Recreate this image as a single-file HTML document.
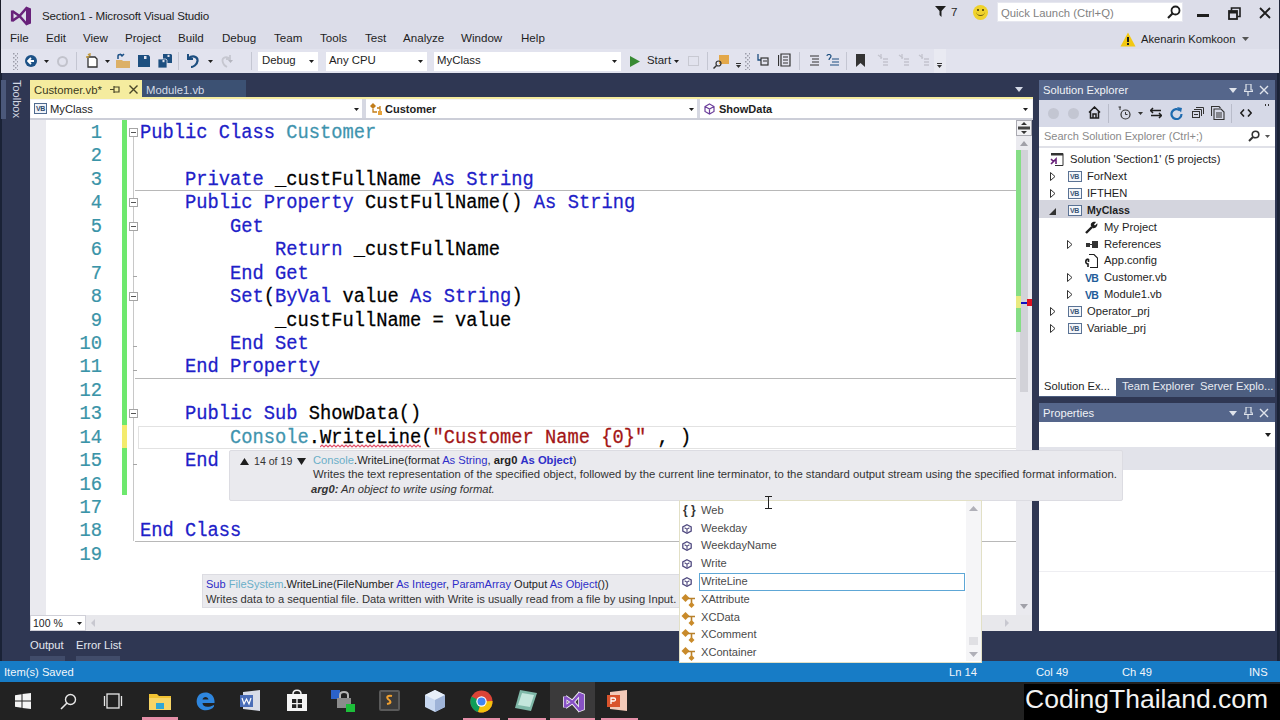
<!DOCTYPE html>
<html><head><meta charset="utf-8">
<style>
*{margin:0;padding:0;box-sizing:border-box}
html,body{width:1280px;height:720px;overflow:hidden;background:#DCDDE9;font-family:"Liberation Sans",sans-serif;}
.a{position:absolute}
.t{position:absolute;white-space:pre;line-height:1}
.mono{font-family:"Liberation Mono",monospace}
#band{left:0;top:73px;width:1280px;height:589px;background:#2B3755}
#status{left:0;top:661px;width:1280px;height:21px;background:#1C83C6}
#task{left:0;top:682px;width:1280px;height:38px;background:#1E1E1E}
#editor{left:30px;top:119px;width:1002px;height:512px;background:#FFFFFF}
.code{position:absolute;left:140px;font-family:"Liberation Mono",monospace;font-size:18.75px;white-space:pre;line-height:23.44px;height:23.44px;color:#000;-webkit-text-stroke:0.25px currentColor;transform-origin:0 0;transform:translateY(0.5px) scaleY(1.1)}
.ln{position:absolute;left:60px;width:42px;text-align:right;font-family:"Liberation Mono",monospace;font-size:18.75px;line-height:23.44px;color:#3A94A8;-webkit-text-stroke:0.2px currentColor;transform-origin:0 0;transform:translateY(0.5px) scaleY(1.1)}
.k{color:#2020C8}
.ty{color:#3F94AE}
.s{color:#A31515}
</style></head><body>
<!-- ===== TOP: title, menu, toolbar ===== -->
<div class="a" style="left:0;top:0;width:1280px;height:49px;background:#DCDDE9"></div>
<div class="a" style="left:0;top:49px;width:1280px;height:24px;background:#E2E3EE"></div>
<div class="a" style="left:0;top:0;width:1px;height:720px;background:#1A1C28"></div>
<!-- VS logo -->
<svg class="a" style="left:5px;top:2px" width="30" height="28" viewBox="0 0 30 28"><path d="M7.2 9 L14.5 14 L22 5.5 M7.2 19 L14.5 14 L22 22.5 M7.2 8.5 V19.5" fill="none" stroke="#68217A" stroke-width="2.6" stroke-linejoin="round"/><path d="M21 4.6 L26 6.6 V21.4 L21 23.4Z" fill="#68217A"/></svg>
<div class="t" style="left:42px;top:10px;font-size:11.6px;letter-spacing:-0.18px;color:#1E1E1E">Section1 - Microsoft Visual Studio</div>
<!-- menu -->
<div class="t" style="left:10px;top:32px;font-size:11.6px;color:#1E1E1E">File</div>
<div class="t" style="left:46px;top:32px;font-size:11.6px;color:#1E1E1E">Edit</div>
<div class="t" style="left:83px;top:32px;font-size:11.6px;color:#1E1E1E">View</div>
<div class="t" style="left:125px;top:32px;font-size:11.6px;color:#1E1E1E">Project</div>
<div class="t" style="left:178px;top:32px;font-size:11.6px;color:#1E1E1E">Build</div>
<div class="t" style="left:222px;top:32px;font-size:11.6px;color:#1E1E1E">Debug</div>
<div class="t" style="left:274px;top:32px;font-size:11.6px;color:#1E1E1E">Team</div>
<div class="t" style="left:320px;top:32px;font-size:11.6px;color:#1E1E1E">Tools</div>
<div class="t" style="left:365px;top:32px;font-size:11.6px;color:#1E1E1E">Test</div>
<div class="t" style="left:403px;top:32px;font-size:11.6px;color:#1E1E1E">Analyze</div>
<div class="t" style="left:461px;top:32px;font-size:11.6px;color:#1E1E1E">Window</div>
<div class="t" style="left:521px;top:32px;font-size:11.6px;color:#1E1E1E">Help</div>
<!-- top right -->
<svg class="a" style="left:935px;top:6px" width="11" height="11" viewBox="0 0 11 11"><path d="M0 0 H11 L6.5 5 V11 L4.5 9 V5 Z" fill="#1E1E1E"/></svg>
<div class="t" style="left:951px;top:6px;font-size:11.6px;color:#1E1E1E">7</div>
<div class="a" style="left:973px;top:5px;width:15px;height:15px;border-radius:50%;background:#EFD22B"></div>
<div class="a" style="left:977px;top:9px;width:2px;height:2px;background:#6B5A10"></div>
<div class="a" style="left:982px;top:9px;width:2px;height:2px;background:#6B5A10"></div>
<div class="a" style="left:976px;top:11px;width:9px;height:5px;border-bottom:1.5px solid #6B5A10;border-radius:0 0 5px 5px"></div>
<div class="a" style="left:997px;top:2px;width:186px;height:20px;background:#FFFFFF;border:1px solid #E6E7EF"></div>
<div class="t" style="left:1001px;top:8px;font-size:11.3px;color:#828282">Quick Launch (Ctrl+Q)</div>
<svg class="a" style="left:1167px;top:5px" width="14" height="14" viewBox="0 0 14 14"><circle cx="8.5" cy="5.5" r="4" fill="none" stroke="#1E1E1E" stroke-width="1.8"/><path d="M5.5 8.5 L1 13" stroke="#1E1E1E" stroke-width="2.2"/></svg>
<div class="a" style="left:1197px;top:14px;width:12px;height:3px;background:#1E1E1E"></div>
<svg class="a" style="left:1228px;top:7px" width="13" height="13" viewBox="0 0 13 13"><path d="M3.5 3.5 V1 H12 V9.5 H9.5" fill="none" stroke="#1E1E1E" stroke-width="1.6"/><rect x="1" y="4" width="8" height="8" fill="none" stroke="#1E1E1E" stroke-width="1.8"/><rect x="1" y="4" width="8" height="2.5" fill="#1E1E1E"/></svg>
<svg class="a" style="left:1259px;top:7px" width="12" height="12" viewBox="0 0 12 12"><path d="M1 1 L11 11 M11 1 L1 11" stroke="#1E1E1E" stroke-width="1.8"/></svg>
<svg class="a" style="left:1120px;top:32px" width="16" height="15" viewBox="0 0 16 15"><path d="M8 0.5 L15.5 14.5 H0.5 Z" fill="#F2C811"/><rect x="7" y="5" width="2" height="5" fill="#1E1E1E"/><rect x="7" y="11" width="2" height="2" fill="#1E1E1E"/></svg>
<div class="t" style="left:1141px;top:34px;font-size:11.2px;color:#1E1E1E">Akenarin Komkoon</div>
<svg class="a" style="left:1242px;top:37px" width="7" height="4"><path d="M0 0 H7 L3.5 4 Z" fill="#555"/></svg>

<!-- toolbar -->
<svg class="a" style="left:13px;top:53px" width="5" height="17"><defs><pattern id="gp13" width="4" height="4" patternUnits="userSpaceOnUse"><rect x="0" y="0" width="1.5" height="1.5" fill="#9C9DAA"/><rect x="2" y="2" width="1.5" height="1.5" fill="#9C9DAA"/></pattern></defs><rect width="5" height="17" fill="url(#gp13)"/></svg>
<div class="a" style="left:25px;top:55px;width:12px;height:12px;border-radius:50%;background:#1D5287"></div>
<svg class="a" style="left:27px;top:57px" width="8" height="8" viewBox="0 0 8 8"><path d="M1 4 H7 M4 1 L1 4 L4 7" fill="none" stroke="#fff" stroke-width="1.8"/></svg>
<svg class="a" style="left:44px;top:60px" width="5" height="3"><path d="M0 0 H5 L2.5 3Z" fill="#1E1E1E"/></svg>
<div class="a" style="left:57px;top:56px;width:11px;height:11px;border-radius:50%;border:2px solid #C2C3CC"></div>
<div class="a" style="left:76px;top:52px;width:1px;height:18px;background:#C4C6D2"></div>
<svg class="a" style="left:85px;top:53px" width="14" height="15" viewBox="0 0 14 15"><path d="M3 4 H10 L12 6 V14 H3 Z" fill="#fff" stroke="#333" stroke-width="1.3"/><path d="M3 1 L5 3 M1 4 H4 M5 0 V3" stroke="#C29A3A" stroke-width="1.3"/></svg>
<svg class="a" style="left:105px;top:60px" width="5" height="3"><path d="M0 0 H5 L2.5 3Z" fill="#1E1E1E"/></svg>
<svg class="a" style="left:116px;top:53px" width="14" height="15" viewBox="0 0 14 15"><path d="M0 7 H6 L7 8 H14 V15 H0 Z" fill="#DCB067"/><path d="M2 6 V3 C2 1 6 1 6 3 M4 1 L6 3 L8 1" fill="none" stroke="#1D5287" stroke-width="1.5"/></svg>
<svg class="a" style="left:138px;top:55px" width="12" height="12" viewBox="0 0 12 12"><path d="M0 0 H10.5 L12 1.5 V12 H0 Z" fill="#1D4F80"/><rect x="6" y="1" width="2.5" height="3" fill="#E2E3EE"/></svg>
<svg class="a" style="left:158px;top:54px" width="14" height="14" viewBox="0 0 14 14"><path d="M5 0 H13 L14 1 V9 H5 Z" fill="#1D4F80"/><rect x="9.5" y="0.8" width="2" height="2.2" fill="#E2E3EE"/><path d="M0 5 H8 L9 6 V14 H0 Z" fill="#1D4F80" stroke="#E2E3EE" stroke-width="0.8"/><rect x="4.5" y="6" width="2" height="2.2" fill="#E2E3EE"/></svg>
<div class="a" style="left:178px;top:52px;width:1px;height:18px;background:#C4C6D2"></div>
<svg class="a" style="left:186px;top:53px" width="13" height="15" viewBox="0 0 13 15"><path d="M2 1 V6 H7" fill="none" stroke="#1D4F80" stroke-width="2"/><path d="M2.5 5.5 C6 2 12 3 11.5 8 C11 12 7 14 5 14" fill="none" stroke="#1D4F80" stroke-width="2.2"/></svg>
<svg class="a" style="left:208px;top:60px" width="5" height="3"><path d="M0 0 H5 L2.5 3Z" fill="#1E1E1E"/></svg>
<svg class="a" style="left:221px;top:54px" width="11" height="14" viewBox="0 0 11 14"><path d="M9 1 V5 H5 M8.5 4.5 C6 2 1 3 1.5 7 C2 10 4 12 6 13" fill="none" stroke="#C6C7D0" stroke-width="1.8"/></svg>
<svg class="a" style="left:228px;top:60px" width="5" height="3"><path d="M0 0 H5 L2.5 3Z" fill="#B5B6BF"/></svg>
<div class="a" style="left:251px;top:52px;width:1px;height:18px;background:#C4C6D2"></div>
<!-- combos -->
<div class="a" style="left:258px;top:52px;width:60px;height:19px;background:#FFFFFF"></div>
<div class="t" style="left:262px;top:55px;font-size:11.4px;color:#1E1E1E">Debug</div>
<svg class="a" style="left:309px;top:60px" width="5" height="3"><path d="M0 0 H5 L2.5 3Z" fill="#1E1E1E"/></svg>
<div class="a" style="left:326px;top:52px;width:101px;height:19px;background:#FFFFFF"></div>
<div class="t" style="left:329px;top:55px;font-size:11.4px;color:#1E1E1E">Any CPU</div>
<svg class="a" style="left:418px;top:60px" width="5" height="3"><path d="M0 0 H5 L2.5 3Z" fill="#1E1E1E"/></svg>
<div class="a" style="left:434px;top:52px;width:187px;height:19px;background:#FFFFFF"></div>
<div class="t" style="left:437px;top:55px;font-size:11.4px;color:#1E1E1E">MyClass</div>
<svg class="a" style="left:612px;top:60px" width="5" height="3"><path d="M0 0 H5 L2.5 3Z" fill="#1E1E1E"/></svg>
<svg class="a" style="left:630px;top:56px" width="10" height="11"><path d="M0 0 L10 5.5 L0 11Z" fill="#388A34"/></svg>
<div class="t" style="left:647px;top:55px;font-size:11.4px;color:#1E1E1E">Start</div>
<svg class="a" style="left:674px;top:60px" width="5" height="3"><path d="M0 0 H5 L2.5 3Z" fill="#1E1E1E"/></svg>
<div class="a" style="left:688px;top:56px;width:11px;height:10px;border:1px solid #C8C9D2"></div>
<div class="a" style="left:707px;top:52px;width:1px;height:18px;background:#C4C6D2"></div>
<div class="a" style="left:719px;top:55px;width:10px;height:9px;background:#E3A84A"></div>
<svg class="a" style="left:713px;top:60px" width="9" height="9"><circle cx="5.5" cy="3.5" r="2.5" fill="none" stroke="#333" stroke-width="1.2"/><path d="M3.5 5.5 L0.5 8.5" stroke="#333" stroke-width="1.5"/></svg>
<svg class="a" style="left:736px;top:63px" width="5" height="5"><rect x="0" y="0" width="5" height="1" fill="#333"/><path d="M0 2 H5 L2.5 5Z" fill="#333"/></svg>
<svg class="a" style="left:745px;top:53px" width="5" height="17"><defs><pattern id="gp745" width="4" height="4" patternUnits="userSpaceOnUse"><rect x="0" y="0" width="1.5" height="1.5" fill="#9C9DAA"/><rect x="2" y="2" width="1.5" height="1.5" fill="#9C9DAA"/></pattern></defs><rect width="5" height="17" fill="url(#gp745)"/></svg>
<svg class="a" style="left:757px;top:54px" width="12" height="12" viewBox="0 0 12 12"><path d="M1 0 V6 H4" fill="none" stroke="#1D4F80" stroke-width="1.3"/><rect x="4" y="4" width="7" height="7" fill="none" stroke="#333" stroke-width="1.2"/><path d="M6 7 H10" stroke="#333"/></svg>
<svg class="a" style="left:778px;top:53px" width="14" height="14" viewBox="0 0 14 14"><path d="M0.5 2 V13 M3 1 H12 V13 H3 Z M5 4 H10 M5 7 H10 M5 10 H10" fill="none" stroke="#333" stroke-width="1.2"/></svg>
<div class="a" style="left:799px;top:52px;width:1px;height:18px;background:#C4C6D2"></div>
<svg class="a" style="left:810px;top:55px" width="10" height="11"><path d="M0 1 H9 M2 4 H9 M2 7 H9 M0 10 H9" stroke="#333" stroke-width="1.2"/></svg>
<svg class="a" style="left:826px;top:54px" width="14" height="13"><path d="M1 2 C1 0 5 0 5 2 C5 4 3 4 3 6 M6 5 H13 M6 8 H13 M4 11 H13" fill="none" stroke="#1D4F80" stroke-width="1.2"/></svg>
<div class="a" style="left:846px;top:52px;width:1px;height:18px;background:#C4C6D2"></div>
<svg class="a" style="left:856px;top:54px" width="9" height="13"><path d="M0 0 H9 V13 L4.5 9 L0 13Z" fill="#333"/></svg>
<svg class="a" style="left:877px;top:54px" width="12" height="12"><path d="M1 1 L5 4 M4 0 V5 M6 5 H11 M6 8 H11 M6 11 H11" stroke="#C3C4CE" stroke-width="1.3"/></svg>
<svg class="a" style="left:898px;top:54px" width="12" height="12"><path d="M1 1 L5 4 M4 0 V5 M6 5 H11 M6 8 H11 M6 11 H11" stroke="#C3C4CE" stroke-width="1.3"/></svg>
<svg class="a" style="left:918px;top:54px" width="12" height="12"><path d="M1 1 L5 4 M4 0 V5 M6 5 H11 M6 8 H11 M6 11 H11" stroke="#C3C4CE" stroke-width="1.3"/></svg>
<div class="a" style="left:934px;top:49px;width:12px;height:24px;background:#E9EAF2"></div>
<svg class="a" style="left:937px;top:63px" width="5" height="5"><rect x="0" y="0" width="5" height="1" fill="#333"/><path d="M0 2 H5 L2.5 5Z" fill="#333"/></svg>
<!-- ===== DARK BAND / TABS / NAV ===== -->
<div class="a" style="left:0;top:73px;width:1280px;height:589px;background:#2F3753"></div>
<div class="a" style="left:0;top:73px;width:2px;height:589px;background:#1A2236"></div>
<div class="a" style="left:1277px;top:73px;width:3px;height:589px;background:#1A2236"></div>
<div class="a" style="left:1279px;top:0;width:1px;height:720px;background:#20263A"></div>
<!-- toolbox -->
<div class="a" style="left:1px;top:80px;width:5px;height:39px;background:#4B587A"></div>
<div class="t" style="left:22px;top:80px;font-size:11px;color:#D3D8E4;transform-origin:0 0;transform:rotate(90deg)">Toolbox</div>
<!-- doc tabs -->
<div class="a" style="left:30px;top:80px;width:112px;height:19px;background:#F5EC9F"></div>
<div class="t" style="left:34px;top:85px;font-size:11.3px;color:#3B3A20">Customer.vb*</div>
<svg class="a" style="left:110px;top:85px" width="10" height="9" viewBox="0 0 10 9"><path d="M0 4.5 H4 M4 1 V8 M4 2 H9 V7 H4" fill="none" stroke="#4A4628" stroke-width="1.2"/></svg>
<svg class="a" style="left:129px;top:85px" width="9" height="9"><path d="M0.5 0.5 L8.5 8.5 M8.5 0.5 L0.5 8.5" stroke="#4A4628" stroke-width="1.4"/></svg>
<div class="a" style="left:142px;top:80px;width:104px;height:17px;background:#3C5173"></div>
<div class="t" style="left:146px;top:85px;font-size:11.3px;color:#D4DAE6">Module1.vb</div>
<svg class="a" style="left:1015px;top:87px" width="8" height="5"><path d="M0 0 H8 L4 5Z" fill="#D5DAE6"/></svg>
<div class="a" style="left:30px;top:97px;width:1003px;height:2px;background:#F5EC9F"></div>
<!-- nav bar -->
<div class="a" style="left:30px;top:99px;width:1003px;height:21px;background:#F4F4F7"></div>
<div class="a" style="left:31px;top:100px;width:331px;height:19px;background:#FFFFFF"></div>
<div class="a" style="left:366px;top:100px;width:331px;height:19px;background:#FFFFFF"></div>
<div class="a" style="left:700px;top:100px;width:332px;height:19px;background:#FFFFFF"></div>
<div class="a" style="left:362px;top:99px;width:4px;height:21px;background:#D6D8E2"></div>
<div class="a" style="left:697px;top:99px;width:3px;height:21px;background:#D6D8E2"></div>
<div class="a" style="left:30px;top:118px;width:1003px;height:2px;background:#CCCED8"></div>
<div class="a" style="left:34px;top:103px;width:13px;height:11px;border:1px solid #4F6A8F;background:#F0F3F8"></div>
<div class="t" style="left:36px;top:105px;font-size:7px;font-weight:700;color:#2E4A6E;letter-spacing:-0.5px">VB</div>
<div class="t" style="left:50px;top:104px;font-size:11.2px;color:#1E1E1E">MyClass</div>
<svg class="a" style="left:354px;top:108px" width="5" height="3"><path d="M0 0 H5 L2.5 3Z" fill="#1E1E1E"/></svg>
<svg class="a" style="left:370px;top:103px" width="13" height="12" viewBox="0 0 13 12"><path d="M0 3 L3 0 L6 3 L3 6Z" fill="#C27D1A"/><path d="M3 6 V9 H7 M7 5 H10 M10 3 V11" fill="none" stroke="#C27D1A" stroke-width="1.3"/><rect x="8" y="8" width="4" height="4" fill="#E8A33A"/></svg>
<div class="t" style="left:385px;top:104px;font-size:11px;font-weight:700;color:#1E1E1E">Customer</div>
<svg class="a" style="left:689px;top:108px" width="5" height="3"><path d="M0 0 H5 L2.5 3Z" fill="#1E1E1E"/></svg>
<svg class="a" style="left:704px;top:103px" width="11" height="12" viewBox="0 0 11 12"><path d="M5.5 1 L10 3.5 V8.5 L5.5 11 L1 8.5 V3.5 Z M1 3.5 L5.5 6 L10 3.5 M5.5 6 V11" fill="none" stroke="#6C3F9B" stroke-width="1.2"/></svg>
<div class="t" style="left:719px;top:104px;font-size:11px;font-weight:700;color:#1E1E1E">ShowData</div>
<svg class="a" style="left:1023px;top:108px" width="5" height="3"><path d="M0 0 H5 L2.5 3Z" fill="#1E1E1E"/></svg>
<!-- ===== EDITOR ===== -->
<div class="a" style="left:30px;top:120px;width:986px;height:495px;background:#FFFFFF"></div>
<div class="a" style="left:30px;top:120px;width:16px;height:495px;background:#EAEAEF"></div>
<div class="a" style="left:138px;top:426px;width:878px;height:23px;border:1px solid #E2E2E2;border-right:none"></div>
<div class="a" style="left:135px;top:190px;width:881px;height:1px;background:#B8B8B8"></div>
<div class="a" style="left:135px;top:378px;width:881px;height:1px;background:#B8B8B8"></div>
<div class="a" style="left:135px;top:541px;width:881px;height:1px;background:#B8B8B8"></div>
<div class="a" style="left:133px;top:136px;width:1px;height:405px;background:#C8C8C8"></div>
<div class="a" style="left:129px;top:128px;width:9px;height:9px;border:1px solid #A5A5A5;background:#fff"></div>
<div class="a" style="left:131px;top:132px;width:5px;height:1px;background:#555"></div>
<div class="a" style="left:129px;top:198px;width:9px;height:9px;border:1px solid #A5A5A5;background:#fff"></div>
<div class="a" style="left:131px;top:202px;width:5px;height:1px;background:#555"></div>
<div class="a" style="left:129px;top:222px;width:9px;height:9px;border:1px solid #A5A5A5;background:#fff"></div>
<div class="a" style="left:131px;top:226px;width:5px;height:1px;background:#555"></div>
<div class="a" style="left:129px;top:292px;width:9px;height:9px;border:1px solid #A5A5A5;background:#fff"></div>
<div class="a" style="left:131px;top:296px;width:5px;height:1px;background:#555"></div>
<div class="a" style="left:129px;top:409px;width:9px;height:9px;border:1px solid #A5A5A5;background:#fff"></div>
<div class="a" style="left:131px;top:413px;width:5px;height:1px;background:#555"></div>
<div class="a" style="left:133px;top:276px;width:4px;height:1px;background:#A5A5A5"></div>
<div class="a" style="left:133px;top:346px;width:4px;height:1px;background:#A5A5A5"></div>
<div class="a" style="left:133px;top:370px;width:4px;height:1px;background:#A5A5A5"></div>
<div class="a" style="left:133px;top:464px;width:4px;height:1px;background:#A5A5A5"></div>
<div class="a" style="left:122px;top:120px;width:5px;height:305px;background:#6EE86E"></div>
<div class="a" style="left:122px;top:425px;width:5px;height:23px;background:#F4EB6E"></div>
<div class="a" style="left:122px;top:448px;width:5px;height:47px;background:#6EE86E"></div>
<div class="ln" style="top:120.00px">1</div>
<div class="ln" style="top:143.44px">2</div>
<div class="ln" style="top:166.88px">3</div>
<div class="ln" style="top:190.32px">4</div>
<div class="ln" style="top:213.76px">5</div>
<div class="ln" style="top:237.20px">6</div>
<div class="ln" style="top:260.64px">7</div>
<div class="ln" style="top:284.08px">8</div>
<div class="ln" style="top:307.52px">9</div>
<div class="ln" style="top:330.96px">10</div>
<div class="ln" style="top:354.40px">11</div>
<div class="ln" style="top:377.84px">12</div>
<div class="ln" style="top:401.28px">13</div>
<div class="ln" style="top:424.72px">14</div>
<div class="ln" style="top:448.16px">15</div>
<div class="ln" style="top:471.60px">16</div>
<div class="ln" style="top:495.04px">17</div>
<div class="ln" style="top:518.48px">18</div>
<div class="ln" style="top:541.92px">19</div>
<div class="code" style="top:120.00px"><span class="k">Public</span> <span class="k">Class</span> <span class="ty">Customer</span></div>
<div class="code" style="top:166.88px">    <span class="k">Private</span> _custFullName <span class="k">As</span> <span class="k">String</span></div>
<div class="code" style="top:190.32px">    <span class="k">Public</span> <span class="k">Property</span> CustFullName() <span class="k">As</span> <span class="k">String</span></div>
<div class="code" style="top:213.76px">        <span class="k">Get</span></div>
<div class="code" style="top:237.20px">            <span class="k">Return</span> _custFullName</div>
<div class="code" style="top:260.64px">        <span class="k">End</span> <span class="k">Get</span></div>
<div class="code" style="top:284.08px">        <span class="k">Set</span>(<span class="k">ByVal</span> value <span class="k">As</span> <span class="k">String</span>)</div>
<div class="code" style="top:307.52px">            _custFullName = value</div>
<div class="code" style="top:330.96px">        <span class="k">End</span> <span class="k">Set</span></div>
<div class="code" style="top:354.40px">    <span class="k">End</span> <span class="k">Property</span></div>
<div class="code" style="top:401.28px">    <span class="k">Public</span> <span class="k">Sub</span> ShowData()</div>
<div class="code" style="top:424.72px">        <span class="ty">Console</span>.WriteLine(<span class="s">"Customer Name {0}"</span> , )</div>
<div class="code" style="top:448.16px">    <span class="k">End</span></div>
<div class="code" style="top:518.48px"><span class="k">End</span> <span class="k">Class</span></div>
<svg class="a" style="left:320.0px;top:444px" width="101" height="4"><path d="M0 3 L2 1 L4 3 L6 1 L8 3 L10 1 L12 3 L14 1 L16 3 L18 1 L20 3 L22 1 L24 3 L26 1 L28 3 L30 1 L32 3 L34 1 L36 3 L38 1 L40 3 L42 1 L44 3 L46 1 L48 3 L50 1 L52 3 L54 1 L56 3 L58 1 L60 3 L62 1 L64 3 L66 1 L68 3 L70 1 L72 3 L74 1 L76 3 L78 1 L80 3 L82 1 L84 3 L86 1 L88 3 L90 1 L92 3 L94 1 L96 3 L98 1 L100 3 L102 1" fill="none" stroke="#E0506A" stroke-width="1.2"/></svg>
<div class="a" style="left:1016px;top:120px;width:16px;height:495px;background:#EAEAEF"></div>
<div class="a" style="left:1016px;top:120px;width:16px;height:16px;border:1px solid #AAAAB2;background:#F2F2F5"></div>
<svg class="a" style="left:1018px;top:122px" width="12" height="12" viewBox="0 0 12 12"><path d="M6 0 L9 3 H3Z M6 12 L9 9 H3Z" fill="#333"/><rect x="0" y="4.5" width="12" height="3" fill="#444"/></svg>
<svg class="a" style="left:1020px;top:141px" width="8" height="5"><path d="M0 5 L4 0 L8 5Z" fill="#A0A0A8"/></svg>
<div class="a" style="left:1020px;top:150px;width:8px;height:242px;background:#D2D2D8"></div>
<div class="a" style="left:1016px;top:150px;width:5px;height:182px;background:#86DE86"></div>
<div class="a" style="left:1016px;top:296px;width:5px;height:12px;background:#EAEA80"></div>
<div class="a" style="left:1021px;top:302px;width:6px;height:2px;background:#1010C0"></div>
<div class="a" style="left:1027px;top:299px;width:5px;height:7px;background:#E01020"></div>
<svg class="a" style="left:1020px;top:604px" width="8" height="5"><path d="M0 0 L4 5 L8 0Z" fill="#A0A0A8"/></svg>
<div class="a" style="left:30px;top:615px;width:1002px;height:16px;background:#E8E8EC"></div>
<div class="a" style="left:30px;top:615px;width:56px;height:16px;background:#FFFFFF;border:1px solid #D0D0D8"></div>
<div class="t" style="left:33px;top:618px;font-size:10.5px;color:#1E1E1E">100 %</div>
<svg class="a" style="left:77px;top:622px" width="5" height="3"><path d="M0 0 H5 L2.5 3Z" fill="#1E1E1E"/></svg>
<svg class="a" style="left:91px;top:619px" width="4" height="8"><path d="M4 0 L0 4 L4 8Z" fill="#C8C8D0"/></svg>
<svg class="a" style="left:1005px;top:619px" width="4" height="8"><path d="M0 0 L4 4 L0 8Z" fill="#C8C8D0"/></svg>
<!-- ===== SOLUTION EXPLORER ===== -->
<div class="a" style="left:1039px;top:80px;width:236px;height:20px;background:#55668B"></div>
<div class="t" style="left:1043px;top:85px;font-size:11.2px;color:#F0F2F6">Solution Explorer</div>
<svg class="a" style="left:1229px;top:88px" width="8" height="5"><path d="M0 0 H8 L4 5Z" fill="#E0E4EC"/></svg>
<svg class="a" style="left:1244px;top:84px" width="9" height="12" viewBox="0 0 9 12"><path d="M2 0 H7 V6 H9 V7.5 H0 V6 H2Z M4 7.5 V12" fill="none" stroke="#E0E4EC" stroke-width="1.2"/></svg>
<svg class="a" style="left:1259px;top:85px" width="10" height="10"><path d="M1 1 L9 9 M9 1 L1 9" stroke="#E0E4EC" stroke-width="1.4"/></svg>
<div class="a" style="left:1039px;top:100px;width:236px;height:27px;background:#D6D9E7"></div>
<div class="a" style="left:1048px;top:108px;width:11px;height:11px;border-radius:50%;background:#C3C6D2"></div>
<div class="a" style="left:1068px;top:108px;width:11px;height:11px;border-radius:50%;background:#C3C6D2"></div>
<svg class="a" style="left:1088px;top:106px" width="13" height="13" viewBox="0 0 13 13"><path d="M1 6.5 L6.5 1 L12 6.5 M2.5 5 V12 H10.5 V5 M5 12 V8 H8 V12" fill="none" stroke="#1E1E1E" stroke-width="1.5"/></svg>
<div class="a" style="left:1108px;top:104px;width:1px;height:19px;background:#B9BCCA"></div>
<svg class="a" style="left:1118px;top:106px" width="13" height="14" viewBox="0 0 13 14"><path d="M0.5 1 H3 M2 1 V4" stroke="#333" stroke-width="1"/><circle cx="7.5" cy="8.5" r="4.5" fill="none" stroke="#333" stroke-width="1.2"/><path d="M7.5 6 V8.5 H9.5" fill="none" stroke="#333" stroke-width="1"/></svg>
<svg class="a" style="left:1138px;top:112px" width="5" height="3"><path d="M0 0 H5 L2.5 3Z" fill="#333"/></svg>
<svg class="a" style="left:1150px;top:107px" width="12" height="12" viewBox="0 0 12 12"><path d="M0 3.5 H11 M3 1 L0.5 3.5 L3 6 M12 8.5 H1 M9 6 L11.5 8.5 L9 11" fill="none" stroke="#1E1E1E" stroke-width="1.5"/></svg>
<svg class="a" style="left:1170px;top:106px" width="13" height="14" viewBox="0 0 13 14"><path d="M10 4.5 A5 5 0 1 0 11.5 8" fill="none" stroke="#1F6BAF" stroke-width="2.2"/><path d="M7 1 L12 2 L11 6.5Z" fill="#1F6BAF"/></svg>
<svg class="a" style="left:1192px;top:107px" width="12" height="11" viewBox="0 0 12 11"><path d="M4 0.5 H11.5 V7 M2 2.5 H9.5 V9" fill="none" stroke="#333" stroke-width="1"/><rect x="0.5" y="4.5" width="7" height="6" fill="#D6D9E7" stroke="#333" stroke-width="1"/><path d="M2 7.5 H6" stroke="#333"/></svg>
<svg class="a" style="left:1211px;top:106px" width="14" height="14" viewBox="0 0 14 14"><path d="M0.5 10 V0.5 H8 L9.5 2" fill="none" stroke="#333" stroke-width="1.1"/><path d="M3 3 H10 L13 6 V13.5 H3 Z" fill="#D6D9E7" stroke="#333" stroke-width="1.1"/><path d="M5 7 H11 M5 9 H11 M5 11 H11" stroke="#333"/></svg>
<div class="a" style="left:1231px;top:104px;width:1px;height:19px;background:#B9BCCA"></div>
<svg class="a" style="left:1240px;top:109px" width="12" height="8" viewBox="0 0 12 8"><path d="M4 0.5 L0.8 4 L4 7.5 M8 0.5 L11.2 4 L8 7.5" fill="none" stroke="#1E1E1E" stroke-width="1.6"/></svg>
<div class="a" style="left:1265px;top:104px;width:1px;height:2px;background:#333"></div>
<div class="a" style="left:1268px;top:104px;width:1px;height:2px;background:#333"></div>
<div class="a" style="left:1039px;top:127px;width:236px;height:19px;background:#FFFFFF"></div>
<div class="t" style="left:1044px;top:131px;font-size:11px;color:#8A8A8A">Search Solution Explorer (Ctrl+;)</div>
<svg class="a" style="left:1248px;top:130px" width="12" height="12" viewBox="0 0 12 12"><circle cx="7.5" cy="4.5" r="3.3" fill="none" stroke="#333" stroke-width="1.6"/><path d="M5 7 L1 11" stroke="#333" stroke-width="2"/></svg>
<svg class="a" style="left:1265px;top:135px" width="5" height="3"><path d="M0 0 H5 L2.5 3Z" fill="#555"/></svg>
<div class="a" style="left:1039px;top:146px;width:236px;height:2px;background:#E0E1E8"></div>
<div class="a" style="left:1039px;top:148px;width:236px;height:230px;background:#FFFFFF"></div>
<div class="a" style="left:1039px;top:200px;width:236px;height:18px;background:#D4D5DE"></div>
<!-- solution icon -->
<svg class="a" style="left:1050px;top:153px" width="14" height="13" viewBox="0 0 14 13"><path d="M1 0.5 H13 V12.5 H5" fill="none" stroke="#333" stroke-width="1"/><path d="M1 0.5 H13 V2.5 H1Z" fill="#333"/><path d="M1 6 L3.5 8.5 L1 11 M3.5 8.5 L6 6 V11" fill="none" stroke="#68217A" stroke-width="1.6"/></svg>
<div class="t" style="left:1070px;top:154px;font-size:11.2px;color:#1E1E1E">Solution 'Section1' (5 projects)</div>
<svg class="a" style="left:1050px;top:172px" width="6" height="9"><path d="M0.5 0.5 L5 4.5 L0.5 8.5Z" fill="none" stroke="#333" stroke-width="1"/></svg>
<div class="a" style="left:1068px;top:171px;width:14px;height:11px;border:1px solid #5A7294;background:#F4F6FA"></div>
<div class="t" style="left:1070px;top:173px;font-size:7px;font-weight:700;color:#3A5476;letter-spacing:-0.5px">VB</div>
<div class="t" style="left:1087px;top:171px;font-size:11.2px;color:#1E1E1E">ForNext</div>
<svg class="a" style="left:1050px;top:189px" width="6" height="9"><path d="M0.5 0.5 L5 4.5 L0.5 8.5Z" fill="none" stroke="#333" stroke-width="1"/></svg>
<div class="a" style="left:1068px;top:188px;width:14px;height:11px;border:1px solid #5A7294;background:#F4F6FA"></div>
<div class="t" style="left:1070px;top:190px;font-size:7px;font-weight:700;color:#3A5476;letter-spacing:-0.5px">VB</div>
<div class="t" style="left:1087px;top:188px;font-size:11.2px;color:#1E1E1E">IFTHEN</div>
<svg class="a" style="left:1049px;top:208px" width="7" height="7"><path d="M7 0 V7 H0Z" fill="#333"/></svg>
<div class="a" style="left:1068px;top:205px;width:14px;height:11px;border:1px solid #5A7294;background:#F4F6FA"></div>
<div class="t" style="left:1070px;top:207px;font-size:7px;font-weight:700;color:#3A5476;letter-spacing:-0.5px">VB</div>
<div class="t" style="left:1087px;top:205px;font-size:10.6px;font-weight:700;color:#1E1E1E">MyClass</div>
<svg class="a" style="left:1085px;top:221px" width="13" height="13" viewBox="0 0 13 13"><path d="M1 12 L7 6" stroke="#1E1E1E" stroke-width="2.4"/><path d="M6 5 C5 2 8 0 11 1 L9 3.5 L10 4.5 L12.3 2.3 C13 5 10.5 8 7.5 7Z" fill="#1E1E1E"/></svg>
<div class="t" style="left:1104px;top:222px;font-size:11.2px;color:#1E1E1E">My Project</div>
<svg class="a" style="left:1067px;top:240px" width="6" height="9"><path d="M0.5 0.5 L5 4.5 L0.5 8.5Z" fill="none" stroke="#333" stroke-width="1"/></svg>
<div class="a" style="left:1086px;top:243px;width:4px;height:4px;background:#333"></div><div class="a" style="left:1090px;top:244px;width:2px;height:1px;background:#333"></div><div class="a" style="left:1092px;top:241px;width:6px;height:7px;background:#333"></div>
<div class="t" style="left:1104px;top:239px;font-size:11.2px;color:#1E1E1E">References</div>
<svg class="a" style="left:1085px;top:254px" width="13" height="14" viewBox="0 0 13 14"><path d="M4 0.5 H9 L12.5 4 V13.5 H5" fill="none" stroke="#1E1E1E" stroke-width="1.1"/><path d="M3.5 5 C0 5 0 10 3 10 V13 M3.5 5 V8" fill="none" stroke="#1E1E1E" stroke-width="1.6"/></svg>
<div class="t" style="left:1104px;top:255px;font-size:11.2px;color:#1E1E1E">App.config</div>
<svg class="a" style="left:1067px;top:273px" width="6" height="9"><path d="M0.5 0.5 L5 4.5 L0.5 8.5Z" fill="none" stroke="#333" stroke-width="1"/></svg>
<div class="t" style="left:1085px;top:273px;font-size:10.5px;font-weight:700;color:#1F5D99;letter-spacing:-0.8px">VB</div>
<div class="t" style="left:1104px;top:272px;font-size:11.2px;color:#1E1E1E">Customer.vb</div>
<svg class="a" style="left:1067px;top:290px" width="6" height="9"><path d="M0.5 0.5 L5 4.5 L0.5 8.5Z" fill="none" stroke="#333" stroke-width="1"/></svg>
<div class="t" style="left:1085px;top:290px;font-size:10.5px;font-weight:700;color:#1F5D99;letter-spacing:-0.8px">VB</div>
<div class="t" style="left:1104px;top:289px;font-size:11.2px;color:#1E1E1E">Module1.vb</div>
<svg class="a" style="left:1050px;top:307px" width="6" height="9"><path d="M0.5 0.5 L5 4.5 L0.5 8.5Z" fill="none" stroke="#333" stroke-width="1"/></svg>
<div class="a" style="left:1068px;top:306px;width:14px;height:11px;border:1px solid #5A7294;background:#F4F6FA"></div>
<div class="t" style="left:1070px;top:308px;font-size:7px;font-weight:700;color:#3A5476;letter-spacing:-0.5px">VB</div>
<div class="t" style="left:1087px;top:306px;font-size:11.2px;color:#1E1E1E">Operator_prj</div>
<svg class="a" style="left:1050px;top:324px" width="6" height="9"><path d="M0.5 0.5 L5 4.5 L0.5 8.5Z" fill="none" stroke="#333" stroke-width="1"/></svg>
<div class="a" style="left:1068px;top:323px;width:14px;height:11px;border:1px solid #5A7294;background:#F4F6FA"></div>
<div class="t" style="left:1070px;top:325px;font-size:7px;font-weight:700;color:#3A5476;letter-spacing:-0.5px">VB</div>
<div class="t" style="left:1087px;top:323px;font-size:11.2px;color:#1E1E1E">Variable_prj</div>
<!-- bottom tabs -->
<div class="a" style="left:1039px;top:378px;width:236px;height:19px;background:#4D5E80"></div>
<div class="a" style="left:1039px;top:378px;width:77px;height:18px;background:#FFFFFF"></div>
<div class="t" style="left:1044px;top:381px;font-size:11.2px;color:#1E1E1E">Solution Ex...</div>
<div class="t" style="left:1122px;top:381px;font-size:11.2px;color:#E8EBF2">Team Explorer</div>
<div class="t" style="left:1200px;top:381px;font-size:11.2px;color:#E8EBF2">Server Explo...</div>
<!-- properties -->
<div class="a" style="left:1039px;top:403px;width:236px;height:19px;background:#55668B"></div>
<div class="t" style="left:1043px;top:408px;font-size:11.2px;color:#F0F2F6">Properties</div>
<svg class="a" style="left:1229px;top:411px" width="8" height="5"><path d="M0 0 H8 L4 5Z" fill="#E0E4EC"/></svg>
<svg class="a" style="left:1244px;top:407px" width="9" height="12" viewBox="0 0 9 12"><path d="M2 0 H7 V6 H9 V7.5 H0 V6 H2Z M4 7.5 V12" fill="none" stroke="#E0E4EC" stroke-width="1.2"/></svg>
<svg class="a" style="left:1259px;top:408px" width="10" height="10"><path d="M1 1 L9 9 M9 1 L1 9" stroke="#E0E4EC" stroke-width="1.4"/></svg>
<div class="a" style="left:1039px;top:422px;width:236px;height:209px;background:#FFFFFF"></div>
<svg class="a" style="left:1265px;top:433px" width="6" height="4"><path d="M0 0 H6 L3 4Z" fill="#1E1E1E"/></svg>
<div class="a" style="left:1039px;top:447px;width:236px;height:23px;background:#E2E3EA"></div>
<div class="a" style="left:1039px;top:571px;width:236px;height:1px;background:#EEEEF2"></div>
<!-- ===== OUTPUT TABS / STATUS / TASKBAR ===== -->
<div class="t" style="left:30px;top:640px;font-size:11.2px;color:#E4E7EF">Output</div>
<div class="t" style="left:76px;top:640px;font-size:11.2px;color:#E4E7EF">Error List</div>
<div class="a" style="left:30px;top:656px;width:35px;height:5px;background:#414C6A"></div>
<div class="a" style="left:76px;top:656px;width:44px;height:5px;background:#414C6A"></div>
<div class="a" style="left:0;top:661px;width:1280px;height:21px;background:#177CC6"></div>
<div class="t" style="left:4px;top:667px;font-size:11.2px;color:#F2F6FA">Item(s) Saved</div>
<div class="t" style="left:949px;top:667px;font-size:11.2px;color:#F2F6FA">Ln 14</div>
<div class="t" style="left:1036px;top:667px;font-size:11.2px;color:#F2F6FA">Col 49</div>
<div class="t" style="left:1122px;top:667px;font-size:11.2px;color:#F2F6FA">Ch 49</div>
<div class="t" style="left:1249px;top:667px;font-size:11.2px;color:#F2F6FA">INS</div>
<div class="a" style="left:0;top:682px;width:1280px;height:38px;background:#222222"></div>
<!-- windows logo -->
<svg class="a" style="left:15px;top:693px" width="16" height="16" viewBox="0 0 16 16"><path d="M0 2.2 L6.5 1.3 V7.5 H0Z M7.5 1.1 L16 0 V7.5 H7.5Z M0 8.5 H6.5 V14.7 L0 13.8Z M7.5 8.5 H16 V16 L7.5 14.9Z" fill="#F4F4F4"/></svg>
<svg class="a" style="left:60px;top:693px" width="17" height="17" viewBox="0 0 17 17"><circle cx="10.5" cy="6.5" r="5" fill="none" stroke="#E8E8E8" stroke-width="1.4"/><path d="M7 10 L1 16" stroke="#E8E8E8" stroke-width="1.6"/></svg>
<svg class="a" style="left:103px;top:693px" width="20" height="16" viewBox="0 0 20 16"><rect x="4" y="1" width="12" height="14" fill="none" stroke="#E8E8E8" stroke-width="1.3"/><path d="M1.5 3 V13 M18.5 3 V13" stroke="#E8E8E8" stroke-width="1.3"/></svg>
<!-- explorer -->
<svg class="a" style="left:149px;top:692px" width="22" height="18" viewBox="0 0 22 18"><path d="M0 2 H8 L10 4 H22 V18 H0Z" fill="#F1C232"/><rect x="0" y="6" width="22" height="12" fill="#F7D566"/><rect x="7" y="11" width="8" height="6" fill="#2FA7D6"/></svg>
<div class="a" style="left:142px;top:717px;width:36px;height:3px;background:#E58FA8"></div>
<svg class="a" style="left:195px;top:692px" width="21" height="20" viewBox="0 0 21 20"><path d="M19 14.5 C16 19 8 19.5 4.5 16 C0 12 1 4 6 1.5 C11 -1 19 1 19.5 9 V11 H7.5 C7.5 14.5 12 16.5 19 13Z M7.5 7.5 H13.5 C13 4 8 4 7.5 7.5Z" fill="#2E86DE" fill-rule="evenodd"/></svg>
<svg class="a" style="left:240px;top:690px" width="23" height="21" viewBox="0 0 23 21"><path d="M3 2 L20 0 V21 L3 19Z" fill="#D8DCE8"/><rect x="0" y="5" width="13" height="12" fill="#4A6DB8"/><path d="M2 8 L4 14 L6.5 9 L9 14 L11 8" fill="none" stroke="#fff" stroke-width="1.2"/></svg>
<svg class="a" style="left:287px;top:689px" width="20" height="22" viewBox="0 0 20 22"><path d="M6 5 C6 0 14 0 14 5" fill="none" stroke="#F4F4F4" stroke-width="1.5"/><path d="M0 5 H20 V22 H0Z" fill="#F4F4F4"/><path d="M5 10 H9.3 V14 H5Z M10.7 10 H15 V14 H10.7Z M5 15.3 H9.3 V19 H5Z M10.7 15.3 H15 V19 H10.7Z" fill="#222222"/></svg>
<svg class="a" style="left:331px;top:690px" width="24" height="22" viewBox="0 0 24 22"><rect x="0" y="0" width="9" height="9" fill="#2B62C8"/><path d="M9 8 V5 C9 1 17 1 17 5 V8" fill="none" stroke="#B5B5B5" stroke-width="2"/><rect x="6" y="8" width="14" height="10" fill="#8C8C8C"/><rect x="15" y="14" width="9" height="8" fill="#1DBF3A"/></svg>
<svg class="a" style="left:379px;top:690px" width="21" height="21" viewBox="0 0 21 21"><rect x="0" y="0" width="21" height="21" rx="2" fill="#5A5A5A"/><rect x="2" y="2" width="17" height="17" fill="#3A3A3A"/><path d="M13 6 C9 5 7 7 9 9 C12 11 13 13 8 14" fill="none" stroke="#F0A030" stroke-width="2"/></svg>
<svg class="a" style="left:425px;top:690px" width="20" height="22" viewBox="0 0 20 22"><path d="M10 0 L20 5 V17 L10 22 L0 17 V5Z" fill="#C8D8F0"/><path d="M0 5 L10 10 L20 5 L10 0Z" fill="#E8F0FA"/><path d="M10 10 V22 L20 17 V5Z" fill="#9FB4D8"/></svg>
<svg class="a" style="left:470px;top:690px" width="23" height="23" viewBox="0 0 23 23"><circle cx="11.5" cy="11.5" r="11" fill="#DB4437"/><path d="M11.5 11.5 L1.5 6.5 A11 11 0 0 0 8 22Z" fill="#0F9D58"/><path d="M11.5 11.5 L8 22 A11 11 0 0 0 22.5 11 Z" fill="#F4C20D"/><circle cx="11.5" cy="11.5" r="5.2" fill="#fff"/><circle cx="11.5" cy="11.5" r="4" fill="#4285F4"/></svg>
<div class="a" style="left:463px;top:718px;width:37px;height:2px;background:#E58FA8"></div>
<svg class="a" style="left:515px;top:690px" width="22" height="21" viewBox="0 0 22 21"><path d="M5 0 L22 3 L16 21 L0 18Z" fill="#7FB8A8"/><path d="M7 3 L19 5 L15 17 L3 15Z" fill="#C4E6DC"/></svg>
<div class="a" style="left:508px;top:718px;width:38px;height:2px;background:#E58FA8"></div>
<div class="a" style="left:550px;top:682px;width:45px;height:38px;background:#3B3A3B"></div>
<svg class="a" style="left:558px;top:688px" width="30" height="28" viewBox="0 0 30 28"><path d="M7.2 9 L14.5 14 L22 5.5 M7.2 19 L14.5 14 L22 22.5 M7.2 8.5 V19.5" fill="none" stroke="#F4F0F8" stroke-width="4.2" stroke-linejoin="round"/><path d="M21 4.6 L26 6.6 V21.4 L21 23.4Z" fill="#F4F0F8" stroke="#F4F0F8" stroke-width="1.6"/><path d="M7.2 9 L14.5 14 L22 5.5 M7.2 19 L14.5 14 L22 22.5 M7.2 8.5 V19.5" fill="none" stroke="#8852C6" stroke-width="2.6" stroke-linejoin="round"/><path d="M21 4.6 L26 6.6 V21.4 L21 23.4Z" fill="#8852C6"/></svg>
<div class="a" style="left:550px;top:718px;width:45px;height:2px;background:#E58FA8"></div>
<svg class="a" style="left:607px;top:690px" width="23" height="21" viewBox="0 0 23 21"><path d="M3 2 L20 0 V21 L3 19Z" fill="#F2C9B8"/><rect x="0" y="5" width="13" height="12" fill="#D9532C"/><path d="M4 14 V8 H7 C9 8 9 11 7 11 H4" fill="none" stroke="#fff" stroke-width="1.3"/></svg>
<div class="a" style="left:601px;top:718px;width:37px;height:2px;background:#E58FA8"></div>
<!-- watermark -->
<div class="a" style="left:1024px;top:684px;width:256px;height:36px;background:#000000"></div>
<div class="t" style="left:1025px;top:686px;font-size:26.5px;color:#F2F2F2">CodingThailand.com</div>
<!-- ===== PARAM INFO TOOLTIP ===== -->
<div class="a" style="left:229px;top:450px;width:894px;height:51px;background:#EAEAEE;border:1px solid #DCDCE2;border-radius:2px"></div>
<svg class="a" style="left:240px;top:458px" width="9" height="7"><path d="M0 7 L4.5 0 L9 7Z" fill="#1E1E1E"/></svg>
<div class="t" style="left:254px;top:456px;font-size:10.6px;color:#333">14 of 19</div>
<svg class="a" style="left:297px;top:458px" width="9" height="7"><path d="M0 0 L4.5 7 L9 0Z" fill="#1E1E1E"/></svg>
<div class="t" style="left:313px;top:455px;font-size:11.2px;color:#1E1E1E"><span style="color:#6AAFC8">Console</span>.WriteLine(format <span style="color:#2E2EC8">As String</span>, <b>arg0</b> <b style="color:#2E2EC8">As Object</b>)</div>
<div class="t" style="left:313px;top:469px;font-size:11.33px;color:#333">Writes the text representation of the specified object, followed by the current line terminator, to the standard output stream using the specified format information.</div>
<div class="t" style="left:311px;top:484px;font-size:11.2px;color:#333;font-style:italic"><b>arg0:</b> An object to write using format.</div>

<!-- ===== QUICK INFO TOOLTIP ===== -->
<div class="a" style="left:202px;top:574px;width:478px;height:34px;background:#EAEAEE;border:1px solid #DCDCE2"></div>
<div class="t" style="left:206px;top:579px;font-size:11.05px;color:#1E1E1E"><span style="color:#2E2EC8">Sub</span> <span style="color:#6AAFC8">FileSystem</span>.WriteLine(FileNumber <span style="color:#2E2EC8">As Integer</span>, <span style="color:#2E2EC8">ParamArray</span> Output <span style="color:#2E2EC8">As Object</span>())</div>
<div class="t" style="left:206px;top:594px;font-size:11.2px;color:#333">Writes data to a sequential file. Data written with Write is usually read from a file by using Input.</div>

<!-- ===== INTELLISENSE LIST ===== -->
<div class="a" style="left:679px;top:500px;width:303px;height:163px;background:#FFFFFF;border:1px solid #E2E0C6"></div>
<div class="a" style="left:966px;top:501px;width:15px;height:160px;background:#F5F5F7"></div>
<svg class="a" style="left:969px;top:506px" width="9" height="5"><path d="M0 5 L4.5 0 L9 5Z" fill="#B0B0B8"/></svg>
<svg class="a" style="left:969px;top:652px" width="9" height="5"><path d="M0 0 L4.5 5 L9 0Z" fill="#B0B0B8"/></svg>
<div class="a" style="left:969px;top:637px;width:9px;height:8px;background:#E0E0E4"></div>
<div class="a" style="left:699px;top:573px;width:266px;height:18px;border:1px solid #5EA7D6"></div>
<div class="t" style="left:683px;top:504px;font-size:12px;font-weight:700;color:#333">{ }</div>
<div class="t" style="left:701px;top:504.7px;font-size:11.1px;color:#4A4A4A">Web</div>
<div class="t" style="left:701px;top:522.7px;font-size:11.1px;color:#4A4A4A">Weekday</div>
<div class="t" style="left:701px;top:540.2px;font-size:11.1px;color:#4A4A4A">WeekdayName</div>
<div class="t" style="left:701px;top:558.2px;font-size:11.1px;color:#4A4A4A">Write</div>
<div class="t" style="left:701px;top:575.8px;font-size:11.1px;color:#4A4A4A">WriteLine</div>
<div class="t" style="left:701px;top:593.8px;font-size:11.1px;color:#4A4A4A">XAttribute</div>
<div class="t" style="left:701px;top:611.7px;font-size:11.1px;color:#4A4A4A">XCData</div>
<div class="t" style="left:701px;top:629.3px;font-size:11.1px;color:#4A4A4A">XComment</div>
<div class="t" style="left:701px;top:647.3px;font-size:11.1px;color:#4A4A4A">XContainer</div>
<svg class="a" style="left:682px;top:524px" width="10" height="10" viewBox="0 0 10 10"><path d="M5 0.7 L9.2 3 V7 L5 9.3 L0.8 7 V3 Z" fill="none" stroke="#504A80" stroke-width="1.3"/><path d="M2.6 3.8 L5 5.2 L7.4 3.8 M5 5.2 V8.5" fill="none" stroke="#504A80" stroke-width="1.1"/></svg>
<svg class="a" style="left:682px;top:541px" width="10" height="10" viewBox="0 0 10 10"><path d="M5 0.7 L9.2 3 V7 L5 9.3 L0.8 7 V3 Z" fill="none" stroke="#504A80" stroke-width="1.3"/><path d="M2.6 3.8 L5 5.2 L7.4 3.8 M5 5.2 V8.5" fill="none" stroke="#504A80" stroke-width="1.1"/></svg>
<svg class="a" style="left:682px;top:559px" width="10" height="10" viewBox="0 0 10 10"><path d="M5 0.7 L9.2 3 V7 L5 9.3 L0.8 7 V3 Z" fill="none" stroke="#504A80" stroke-width="1.3"/><path d="M2.6 3.8 L5 5.2 L7.4 3.8 M5 5.2 V8.5" fill="none" stroke="#504A80" stroke-width="1.1"/></svg>
<svg class="a" style="left:682px;top:577px" width="10" height="10" viewBox="0 0 10 10"><path d="M5 0.7 L9.2 3 V7 L5 9.3 L0.8 7 V3 Z" fill="none" stroke="#504A80" stroke-width="1.3"/><path d="M2.6 3.8 L5 5.2 L7.4 3.8 M5 5.2 V8.5" fill="none" stroke="#504A80" stroke-width="1.1"/></svg>
<svg class="a" style="left:681px;top:594px" width="15" height="14" viewBox="0 0 15 14"><path d="M4.5 0 L8.5 4 L4.5 8 L0.5 4Z" fill="#C98A2A"/><path d="M7 4.5 H14 M10.5 4.5 V10" stroke="#B8802A" stroke-width="1.6"/><path d="M10.5 8 L13.5 11 L10.5 14 L7.5 11Z" fill="#C98A2A"/></svg>
<svg class="a" style="left:681px;top:612px" width="15" height="14" viewBox="0 0 15 14"><path d="M4.5 0 L8.5 4 L4.5 8 L0.5 4Z" fill="#C98A2A"/><path d="M7 4.5 H14 M10.5 4.5 V10" stroke="#B8802A" stroke-width="1.6"/><path d="M10.5 8 L13.5 11 L10.5 14 L7.5 11Z" fill="#C98A2A"/></svg>
<svg class="a" style="left:681px;top:629px" width="15" height="14" viewBox="0 0 15 14"><path d="M4.5 0 L8.5 4 L4.5 8 L0.5 4Z" fill="#C98A2A"/><path d="M7 4.5 H14 M10.5 4.5 V10" stroke="#B8802A" stroke-width="1.6"/><path d="M10.5 8 L13.5 11 L10.5 14 L7.5 11Z" fill="#C98A2A"/></svg>
<svg class="a" style="left:681px;top:647px" width="15" height="14" viewBox="0 0 15 14"><path d="M4.5 0 L8.5 4 L4.5 8 L0.5 4Z" fill="#C98A2A"/><path d="M7 4.5 H14 M10.5 4.5 V10" stroke="#B8802A" stroke-width="1.6"/><path d="M10.5 8 L13.5 11 L10.5 14 L7.5 11Z" fill="#C98A2A"/></svg>
<div class="a" style="left:768px;top:496px;width:1px;height:13px;background:#222"></div><div class="a" style="left:765px;top:496px;width:7px;height:1px;background:#222"></div><div class="a" style="left:765px;top:508px;width:7px;height:1px;background:#222"></div>
</body></html>
